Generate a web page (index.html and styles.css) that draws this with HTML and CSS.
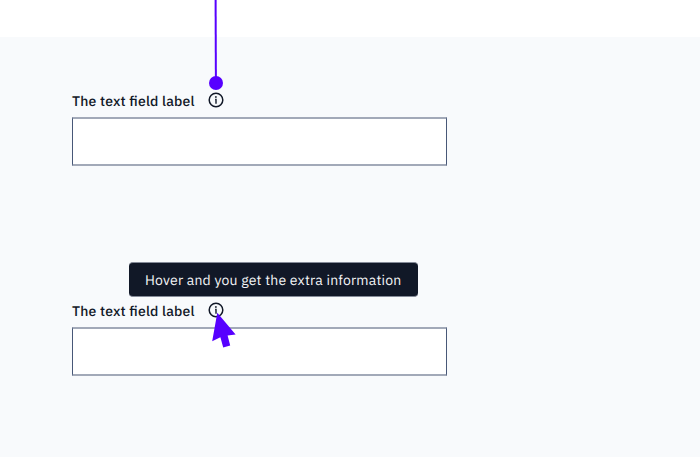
FILE: index.html
```html
<!DOCTYPE html>
<html lang="en">
<head>
<meta charset="utf-8">
<title>Text field tooltip</title>
<link rel="stylesheet" href="styles.css">
</head>
<body>
<main class="panel">
  <section class="field">
    <div class="heading">
      <label class="label" for="first">The text field label</label>
      <span class="info">
        <svg class="icon" viewBox="0 0 16 16"><circle cx="8" cy="8" r="6.8"/><path d="M7 7.5H8V11.8"/><circle class="dot" cx="7.9" cy="5" r="1"/></svg>
        <svg class="pointer" viewBox="0 0 20 92"><path d="M9.6 0L9.9 84"/><circle cx="10" cy="83" r="7"/></svg>
      </span>
    </div>
    <input class="input" id="first" type="text">
  </section>
  <section class="field">
    <div class="heading">
      <label class="label" for="second">The text field label</label>
      <span class="info">
        <svg class="icon" viewBox="0 0 16 16"><circle cx="8" cy="8" r="6.8"/><path d="M7 7.5H8V11.8"/><circle class="dot" cx="7.9" cy="5" r="1"/></svg>
        <span class="tooltip" role="tooltip">Hover and you get the extra information</span>
        <svg class="cursor" viewBox="0 0 24 36"><path d="M5.3 .8L23.6 22.4L15.6 23.5L18.2 33.5L11.2 35.5L8.4 25.2L.2 29.2Z"/></svg>
      </span>
    </div>
    <input class="input" id="second" type="text">
  </section>
</main>
</body>
</html>
```
FILE: styles.css
```css
* { box-sizing: border-box; }
body {
  margin: 0;
  padding-top: 37px;
  height: 458px;
  overflow: hidden;
  background: #fff;
  color: #111827;
  font-family: "IBM Plex Sans", Roboto, "Noto Sans", sans-serif;
  font-size: 14px;
  font-feature-settings: "liga" 1;
  text-rendering: geometricPrecision;
}
.panel {
  height: 420px;
  padding: 52px 0 0 72px;
  background: #f8fafc;
  display: flex;
  flex-direction: column;
  gap: 133px;
}
.field { width: 375px; height: 77px; display: flex; flex-direction: column; }
.heading { height: 28px; display: flex; align-items: flex-start; }
.label { width: 136px; padding-top: 3px; line-height: 18px; font-weight: 500; letter-spacing: .18px; white-space: nowrap; }
.info { position: relative; width: 16px; height: 16px; margin-top: 3px; }
.icon { display: block; width: 16px; height: 16px; fill: none; stroke: #111827; stroke-width: 1.5; }
.icon path { stroke: #303744; stroke-width: 1.6; }
.icon .dot { fill: #303744; stroke: none; }
.input {
  width: 375px;
  height: 49px;
  margin: 0;
  padding: 0 12px;
  border: solid;
  border-width: 2px 1px;
  border-color: #a2a9b8 #475777;
  border-radius: 0;
  background: #fff;
}
.pointer { position: absolute; left: -2px; top: -92px; width: 20px; height: 92px; fill: #5700ff; }
.pointer path { stroke: #5700ff; stroke-width: 2; }
.tooltip {
  position: absolute;
  left: -79px;
  top: -40px;
  width: 289px;
  height: 35px;
  padding: 0 16px;
  border: solid #858b98;
  border-width: 1px 0;
  border-radius: 4px;
  background: #111827;
  color: #f3f4f6;
  letter-spacing: .2px;
  line-height: 34px;
  white-space: nowrap;
}
.cursor { position: absolute; left: 4px; top: 10px; width: 24px; height: 36px; fill: #5700ff; }
```
